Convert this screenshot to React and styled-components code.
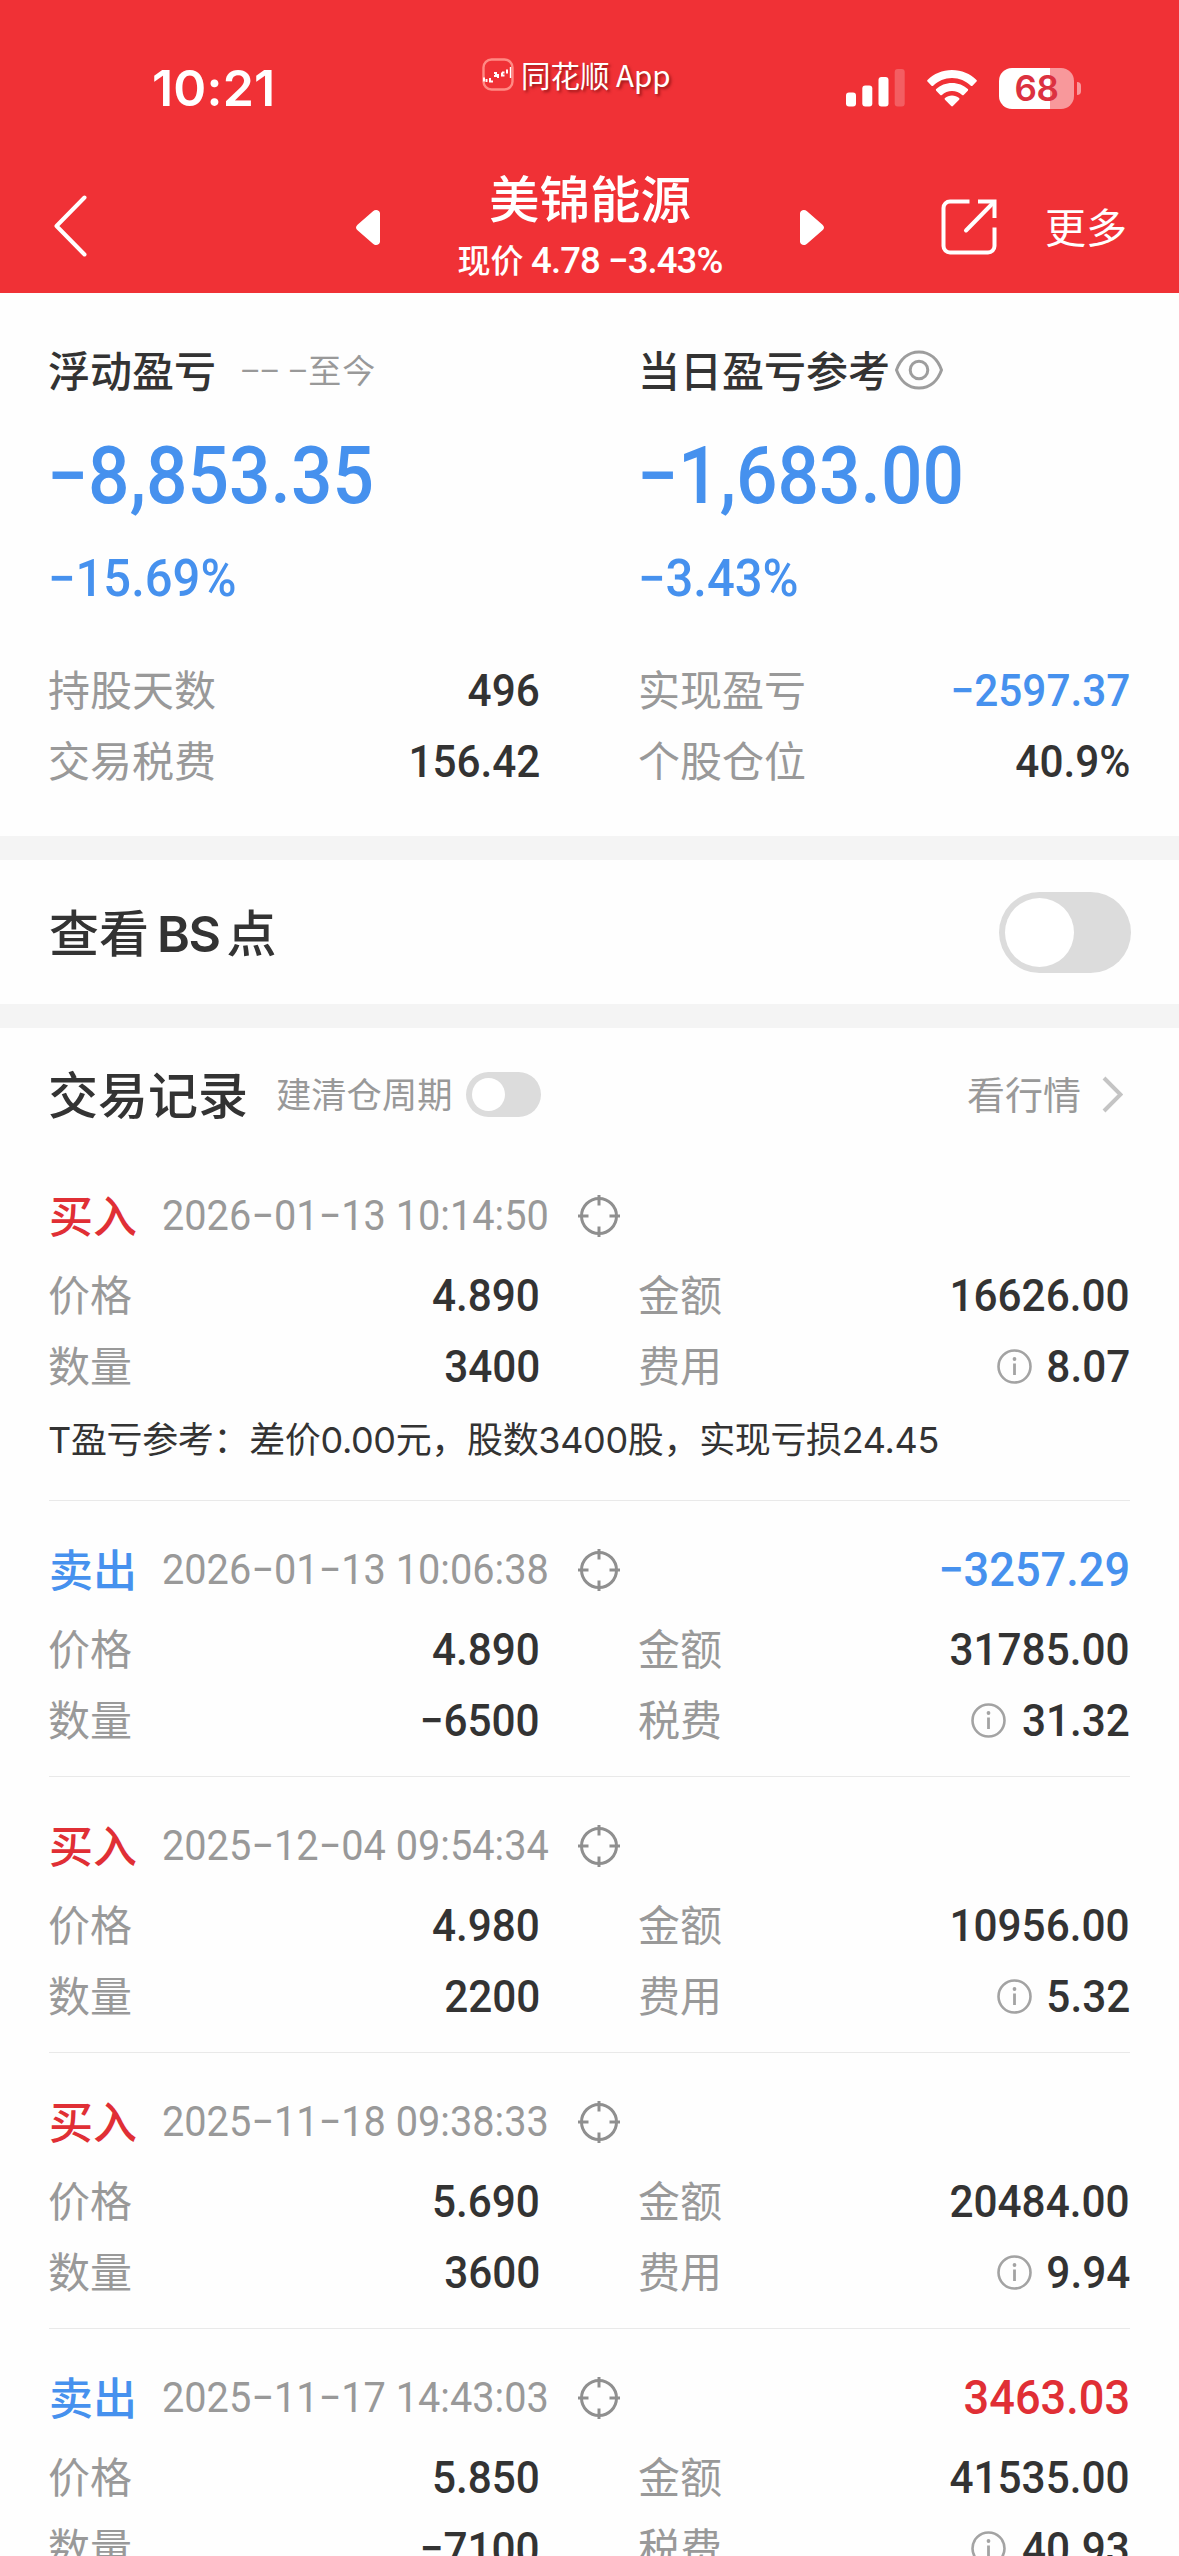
import React from "react";
import styled, { createGlobalStyle } from "styled-components";

const records = [
  {
    type: "buy",
    time: "2026−01−13 10:14:50",
    price: "4.890",
    count: "3400",
    amount: "16626.00",
    feeName: "费用",
    fee: "8.07",
    note: "T盈亏参考：差价0.00元，股数3400股，实现亏损24.45",
  },
  {
    type: "sell",
    time: "2026−01−13 10:06:38",
    profit: "−3257.29",
    price: "4.890",
    count: "−6500",
    amount: "31785.00",
    feeName: "税费",
    fee: "31.32",
  },
  {
    type: "buy",
    time: "2025−12−04 09:54:34",
    price: "4.980",
    count: "2200",
    amount: "10956.00",
    feeName: "费用",
    fee: "5.32",
  },
  {
    type: "buy",
    time: "2025−11−18 09:38:33",
    price: "5.690",
    count: "3600",
    amount: "20484.00",
    feeName: "费用",
    fee: "9.94",
  },
  {
    type: "sell",
    time: "2025−11−17 14:43:03",
    profit: "3463.03",
    price: "5.850",
    count: "−7100",
    amount: "41535.00",
    feeName: "税费",
    fee: "40.93",
  },
];

const LogoIcon = () => (
  <svg width="33" height="34" viewBox="0 0 33 34" fill="none">
    <rect x="1.5" y="1.5" width="29" height="30" rx="8" stroke="#ff8a84" strokeWidth="2.4" />
    <path d="M2 19.5v4M4.5 21v3M8 20v3.5h3" stroke="#fff" strokeWidth="2" />
    <path d="M12 15h2v3h-2M16 16v4M20 14.5h2.5M20 14.500v3h2.500M25 11.500v4" stroke="#fff" strokeWidth="2" />
    <path d="M28.500 9v11" stroke="#fff" strokeWidth="1.4" />
  </svg>
);

const SignalIcon = () => (
  <svg width="59" height="38" viewBox="0 0 59 38" fill="#fff">
    <rect x="0" y="23.500" width="10" height="14" rx="3" />
    <rect x="16.300" y="16.500" width="10" height="21" rx="3" />
    <rect x="32.500" y="8" width="10" height="29.500" rx="3" />
    <rect x="48.700" y="0" width="10" height="37.500" rx="3" opacity="0.22" />
  </svg>
);

const WifiIcon = () => (
  <svg width="50" height="37" viewBox="0 0 50 37" fill="#fff">
    <path d="M25 0C15.400 0 6.800 3.800.5 9.900c-.5.500-.5 1.200 0 1.700l4 4.100c.5.500 1.200.5 1.700 0C11.100 11.100 17.700 8 25 8s13.900 3.100 18.800 7.700c.5.500 1.200.5 1.700 0l4-4.100c.5-.5.500-1.200 0-1.700C43.200 3.800 34.600 0 25 0z" />
    <path d="M25 13c-6.100 0-11.600 2.300-15.800 6.100-.5.500-.5 1.200 0 1.700l4.100 4.100c.4.500 1.100.5 1.600.1 2.700-2.500 6.200-4 10.100-4s7.400 1.500 10.100 4c.5.400 1.200.4 1.600-.1l4.100-4.100c.5-.5.500-1.200 0-1.700C36.600 15.300 31.100 13 25 13z" />
    <path d="M25 25.500c-2.700 0-5.100 1-7 2.600-.5.400-.5 1.200 0 1.700l6.200 6.300c.5.500 1.200.5 1.700 0l6.200-6.300c.5-.5.500-1.200 0-1.700-1.900-1.600-4.400-2.600-7.100-2.600z" />
  </svg>
);

const BackIcon = () => (
  <svg width="34" height="62" viewBox="0 0 34 62" fill="none">
    <path d="M31.500 2.500L3.500 31l28 28.500" stroke="#fff" strokeWidth="4" strokeLinecap="round" strokeLinejoin="round" />
  </svg>
);

const Triangle = ({ right }) => (
  <svg width="24" height="39" viewBox="0 0 24 39" fill="#fff">
    <path
      transform={right ? "translate(24 0) scale(-1 1)" : undefined}
      d="M17 3.200C19.500.800 24 2 24 5.500v28c0 3.500-4.500 4.700-7 2.300L1.500 22.300c-2-1.800-2-3.800 0-5.600z"
    />
  </svg>
);

const ShareIcon = () => (
  <svg width="56" height="56" viewBox="0 0 56 56" fill="none" stroke="#fff" strokeWidth="4">
    <path d="M28.500 2.500H9a6.500 6.500 0 0 0-6.500 6.500v38a6.500 6.500 0 0 0 6.500 6.500h38a6.500 6.500 0 0 0 6.500-6.500V28.500" />
    <path d="M37 2.500h16.500V19" />
    <path d="M52.500 3.500L25 31.500" strokeLinecap="round" />
  </svg>
);

const EyeIcon = () => (
  <svg width="48" height="40" viewBox="0 0 48 40" fill="none" stroke="#9d9d9d" strokeWidth="3">
    <path d="M1.500 20C5 10 12.500 2 24 2s19 8 22.500 18C43 30 35.500 38 24 38S5 30 1.500 20z" strokeLinejoin="round" />
    <circle cx="24" cy="20" r="8.800" />
  </svg>
);

const TargetIcon = () => (
  <svg width="42" height="42" viewBox="0 0 42 42" fill="none" stroke="#8f8f8f" strokeWidth="3">
    <circle cx="21" cy="21" r="17.500" />
    <path d="M21 0v10.500M21 31.500V42M0 21h10.500M31.500 21H42" />
  </svg>
);

const InfoIcon = () => (
  <svg width="35" height="35" viewBox="0 0 35 35" fill="none" stroke="#a3a3a3" strokeWidth="2.600">
    <circle cx="17.500" cy="17.500" r="16" />
    <path d="M17.500 14.500V26" strokeWidth="2.800" />
    <circle cx="17.500" cy="10" r="1.900" fill="#a3a3a3" stroke="none" />
  </svg>
);

const ArrowIcon = () => (
  <svg width="21" height="37" viewBox="0 0 21 37" fill="none">
    <path d="M2 2l16.500 16.500L2 35" stroke="#c4c4c4" strokeWidth="4" />
  </svg>
);

const Record = ({ item }) => (
  <RecordBox>
    <RecordHead>
      <Side $sell={item.type === "sell"}>{item.type === "sell" ? "卖出" : "买入"}</Side>
      <Time>{item.time}</Time>
      <TargetIcon />
      {item.profit && <Profit $down={item.profit.startsWith("−")}>{item.profit}</Profit>}
    </RecordHead>
    <Pairs>
      <Pair>
        <Label>价格</Label>
        <Value>{item.price}</Value>
      </Pair>
      <Pair>
        <Label>金额</Label>
        <Value>{item.amount}</Value>
      </Pair>
      <Pair>
        <Label>数量</Label>
        <Value>{item.count}</Value>
      </Pair>
      <Pair>
        <Label>{item.feeName}</Label>
        <Fee>
          <InfoIcon />
          <Value>{item.fee}</Value>
        </Fee>
      </Pair>
    </Pairs>
    {item.note && <Note>{item.note}</Note>}
  </RecordBox>
);

const App = () => {
  return (
    <Page>
      <GlobalStyle />
      <Header>
        <StatusBar>
          <Clock>10:21</Clock>
          <AppMark>
            <LogoIcon />
            <span>同花顺 App</span>
          </AppMark>
          <StatusIcons>
            <SignalIcon />
            <WifiIcon />
            <Battery>
              <BatteryBody>68</BatteryBody>
              <BatteryNub />
            </Battery>
          </StatusIcons>
        </StatusBar>
        <NavBar>
          <NavLeft>
            <BackIcon />
          </NavLeft>
          <NavTitle>
            <Triangle />
            <Stock>
              <h1>美锦能源</h1>
              <p>
                现价 <b>4.78 −3.43%</b>
              </p>
            </Stock>
            <Triangle right />
          </NavTitle>
          <NavRight>
            <ShareIcon />
            <span>更多</span>
          </NavRight>
        </NavBar>
      </Header>

      <Summary>
        <Cell>
          <CellTitle>
            <span>浮动盈亏</span>
            <small>−− −至今</small>
          </CellTitle>
          <BigNumber>−8,853.35</BigNumber>
          <Percent>−15.69%</Percent>
        </Cell>
        <Cell>
          <CellTitle>
            <span>当日盈亏参考</span>
            <EyeIcon />
          </CellTitle>
          <BigNumber>−1,683.00</BigNumber>
          <Percent>−3.43%</Percent>
        </Cell>
        <Pair>
          <Label>持股天数</Label>
          <Value>496</Value>
        </Pair>
        <Pair>
          <Label>实现盈亏</Label>
          <Value $down>−2597.37</Value>
        </Pair>
        <Pair>
          <Label>交易税费</Label>
          <Value>156.42</Value>
        </Pair>
        <Pair>
          <Label>个股仓位</Label>
          <Value>40.9%</Value>
        </Pair>
      </Summary>

      <BsRow>
        <h2>
          查看<i>BS</i>点
        </h2>
        <Switch $w={132} $h={81} $knob={69} />
      </BsRow>

      <ListHead>
        <h2>交易记录</h2>
        <span>建清仓周期</span>
        <Switch $w={75} $h={45} $knob={33} />
        <More>
          <span>看行情</span>
          <ArrowIcon />
        </More>
      </ListHead>

      {records.map((item) => (
        <Record key={item.time} item={item} />
      ))}
    </Page>
  );
};

export default App;

const GlobalStyle = createGlobalStyle`
  * {
    box-sizing: border-box;
    margin: 0;
    padding: 0;
  }

  body {
    background-color: #fefefe;
    font-family: "Noto Sans CJK SC", sans-serif;
  }

  svg {
    display: block;
    flex-shrink: 0;
  }
`;

const Page = styled.div`
  width: 1179px;
  height: 2556px;
  overflow: hidden;
  color: #333;
  line-height: 1;
  white-space: nowrap;
`;

const Header = styled.header`
  height: 293px;
  background-color: #f03136;
  color: #fff;
`;

const StatusBar = styled.div`
  height: 160px;
  padding: 57px 98px 0 152px;
  display: flex;
  justify-content: space-between;
`;

const Clock = styled.div`
  width: 330px;
  margin-top: 6px;
  font-family: Inter, sans-serif;
  font-size: 50px;
  font-weight: 600;
  letter-spacing: 0.2px;
`;

const AppMark = styled.div`
  flex: 1;
  height: 35px;
  display: flex;
  align-items: center;
  gap: 6px;
  font-size: 29.5px;
  text-shadow: 2px 2px 3px rgba(80, 0, 0, 0.55);
`;

const StatusIcons = styled.div`
  height: 62px;
  display: flex;
  align-items: center;
  gap: 22px;
`;

const Battery = styled.div`
  display: flex;
  align-items: center;
  gap: 3px;
`;

const BatteryBody = styled.div`
  width: 75px;
  height: 41px;
  border-radius: 13px;
  background: linear-gradient(to right, #fff 68%, #f8989b 68%);
  color: #dc3140;
  font-family: Inter, sans-serif;
  font-size: 35px;
  font-weight: 600;
  line-height: 41px;
  text-align: center;
  letter-spacing: -0.5px;
`;

const BatteryNub = styled.div`
  width: 4px;
  height: 13px;
  border-radius: 0 4px 4px 0;
  background-color: #f8989b;
`;

const NavBar = styled.div`
  height: 133px;
  display: grid;
  grid-template-columns: 356px 468px 1fr;
`;

const NavLeft = styled.div`
  padding: 35px 0 0 53px;
`;

const NavTitle = styled.div`
  display: flex;
  justify-content: space-between;

  > svg {
    margin-top: 48px;
  }
`;

const Stock = styled.div`
  padding-top: 11px;
  text-align: center;

  h1 {
    font-size: 50.5px;
    font-weight: 500;
    line-height: 50px;
  }

  p {
    margin-top: 18px;
    font-size: 33px;
    font-weight: 500;
    line-height: 40px;
  }

  b {
    font-family: Roboto, sans-serif;
    font-size: 36.5px;
    font-weight: 500;
    letter-spacing: -0.9px;
  }
`;

const NavRight = styled.div`
  padding: 39px 52px 0 0;
  display: flex;
  justify-content: flex-end;
  gap: 48px;

  span {
    margin-top: 6px;
    font-size: 41px;
  }
`;

const Summary = styled.section`
  height: 543px;
  padding: 44px 49px 0;
  display: grid;
  grid-template-columns: 1fr 1fr;
  grid-template-rows: 318px 71px 71px;
  column-gap: 99px;
`;

const Cell = styled.div`
  color: #4691ee;
`;

const CellTitle = styled.div`
  height: 66px;
  display: flex;
  align-items: center;
  color: #333;
  font-size: 42px;
  font-weight: 500;

  span {
    margin-left: -1px;
    padding-bottom: 2px;
  }

  small {
    margin-left: 25px;
    padding-bottom: 2px;
    color: #999;
    font-size: 33px;
    font-weight: 400;
    letter-spacing: 1.2px;
  }

  svg {
    margin-left: 5px;
  }
`;

/* digits are set a little condensed */
const BigNumber = styled.div`
  height: 142px;
  margin-left: -2px;
  padding-top: 2px;
  font-family: Roboto, sans-serif;
  font-size: 79px;
  font-weight: 500;
  line-height: 142px;
  transform: scaleX(0.925);
  transform-origin: left;
`;

const Percent = styled.div`
  margin-left: -1px;
  padding-top: 2px;
  font-family: Roboto, sans-serif;
  font-size: 51px;
  font-weight: 500;
  line-height: 64px;
  transform: scaleX(0.96);
  transform-origin: left;
`;

const Pair = styled.div`
  height: 71px;
  display: flex;
  align-items: center;
  justify-content: space-between;
`;

const Label = styled.span`
  margin-left: -1px;
  padding-bottom: 5px;
  color: #999;
  font-size: 42px;
`;

const Value = styled.span`
  color: ${(props) => (props.$down ? "#4691ee" : "#333")};
  font-family: Roboto, sans-serif;
  font-size: 45px;
  font-weight: 500;
  transform: scaleX(0.94);
  transform-origin: right;
`;

const Fee = styled.span`
  display: flex;
  align-items: center;
  gap: 9px;
`;

const BsRow = styled.section`
  height: 192px;
  padding: 0 48px 0 49px;
  border-top: 24px solid #f4f4f4;
  border-bottom: 24px solid #f4f4f4;
  display: flex;
  align-items: center;
  justify-content: space-between;

  h2 {
    font-size: 50px;
    font-weight: 500;
  }

  i {
    margin: 0 7px 0 8px;
    font-family: Inter, sans-serif;
    font-style: normal;
    font-weight: 600;
    letter-spacing: -1.5px;
  }
`;

const Switch = styled.div`
  width: ${(props) => props.$w}px;
  height: ${(props) => props.$h}px;
  padding: 6px;
  border-radius: 50px;
  background-color: #dcdcdc;

  &::before {
    content: "";
    display: block;
    width: ${(props) => props.$knob}px;
    height: ${(props) => props.$knob}px;
    border-radius: 50%;
    background-color: #fff;
  }
`;

const ListHead = styled.div`
  height: 119px;
  padding: 14px 56px 0 48px;
  display: flex;
  align-items: center;

  h2 {
    padding-bottom: 5px;
    font-size: 50px;
    font-weight: 500;
  }

  > span {
    margin: 0 13px 0 28px;
    padding-bottom: 3px;
    color: #999;
    font-size: 35.3px;
  }
`;

const More = styled.div`
  margin-left: auto;
  display: flex;
  align-items: center;
  gap: 21px;
  color: #999;
  font-size: 38px;

  span {
    padding-bottom: 3px;
  }
`;

const RecordBox = styled.article`
  margin: 0 49px;
  padding: 25px 0 20px;
  border-bottom: 1px solid #e9e9e9;
`;

const RecordHead = styled.div`
  height: 88px;
  display: flex;
  align-items: center;
`;

const Side = styled.span`
  width: 113px;
  padding-bottom: 4px;
  color: ${(props) => (props.$sell ? "#4691ee" : "#e02f35")};
  font-size: 44px;
  font-weight: 500;
`;

const Time = styled.span`
  width: 416px;
  color: #999;
  font-family: Roboto, sans-serif;
  font-size: 42px;
  transform: scaleX(0.945);
  transform-origin: left;
`;

const Profit = styled.span`
  margin-left: auto;
  color: ${(props) => (props.$down ? "#4691ee" : "#e02f35")};
  font-family: Roboto, sans-serif;
  font-size: 48px;
  font-weight: 500;
  transform: scaleX(0.94);
  transform-origin: right;
`;

const Pairs = styled.div`
  display: grid;
  grid-template-columns: 1fr 1fr;
  column-gap: 99px;
`;

const Note = styled.p`
  height: 78px;
  margin-left: -1px;
  font-family: Inter, "Noto Sans CJK SC", sans-serif;
  font-size: 36px;
  line-height: 77px;
  letter-spacing: -0.35px;
`;
